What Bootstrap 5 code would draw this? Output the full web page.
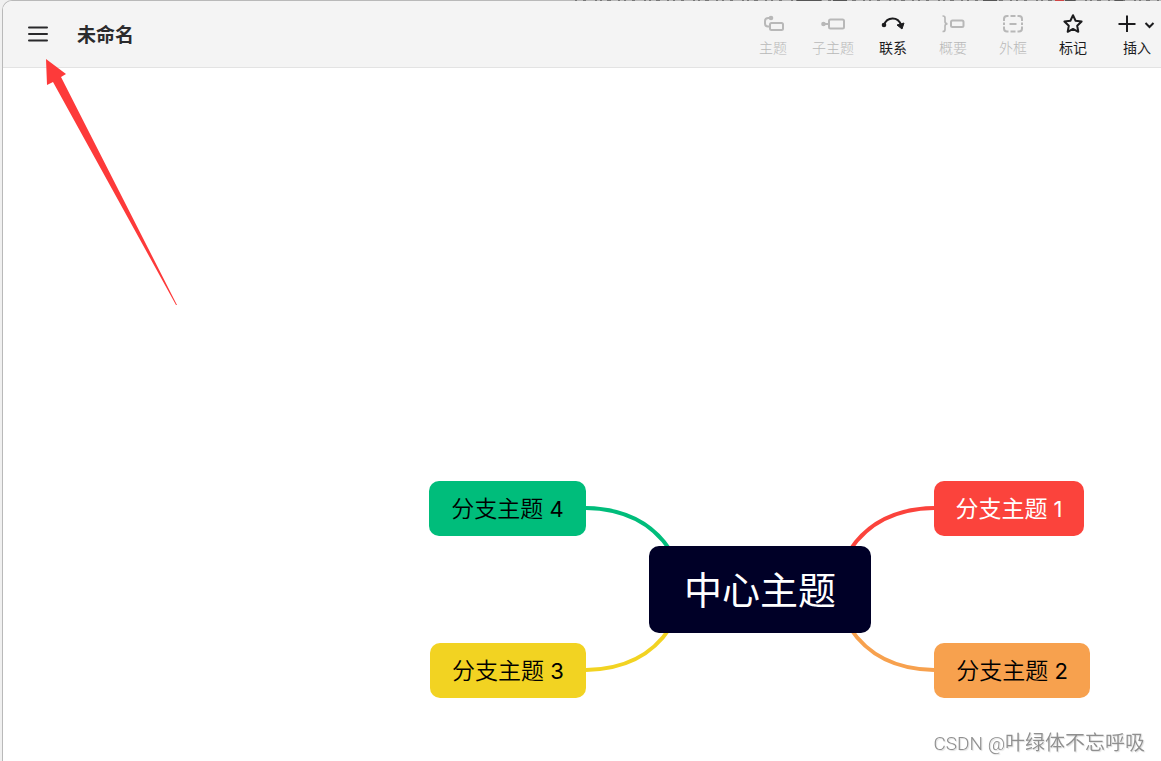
<!DOCTYPE html>
<html lang="zh-CN">
<head>
<meta charset="utf-8">
<meta name="viewport" content="width=device-width, initial-scale=1">
<title>未命名</title>
<link href="https://cdn.jsdelivr.net/npm/bootstrap@5.3.0/dist/css/bootstrap.min.css" rel="stylesheet">
<style>
  body { background: #f0f0f0; font-family: "Noto Sans CJK SC", sans-serif; color: #222; }
  .app-window { min-height: 100vh; margin-left: 2px; border-top: 1px solid #b9b9b9; border-left: 1px solid #b9b9b9; border-top-left-radius: 10px; background: #fff; }
  .backdrop-line { top: 0; right: 0; width: 586px; height: 1px; }
  .topbar { height: 67px; background: #f4f4f4; border-bottom: 1px solid #e3e3e3; }
  .doc-title { font-size: 19px; line-height: 24px; font-weight: 700; color: #2b2b2d; }
  .tool { width: 60px; padding: 0; border: 0; font-size: 14px; line-height: 20px; font-weight: 400; color: #1c1c1e; --bs-btn-disabled-color: #b8b8b8; --bs-btn-disabled-opacity: 1; }
  .tool:disabled { font-weight: 300; }
  .tool svg { display: block; height: 24px; margin: 1px auto; }
  .tool-insert { width: 48px; margin-left: 10px; }
  .board { padding: 0 71px 63px 0; }
  .mind-map { width: 661px; height: 217px; }
  .topic { position: absolute; display: flex; align-items: center; justify-content: center; height: 55px; width: 156px; border-radius: 10px; font-family: Inter, "Noto Sans CJK SC", sans-serif; font-size: 23px; line-height: 32px; font-weight: 350; color: #000; white-space: pre; }
  .topic span { font-weight: 400; font-size: 22px; }
  .topic-1 { left: 505px; top: 0; width: 150px; background: #fb433c; color: #fff; font-weight: 400; }
  .topic-2 { left: 505px; bottom: 0; background: #f7a14e; }
  .topic-3 { left: 1px; bottom: 0; background: #f2d322; }
  .topic-4 { left: 0; top: 0; width: 157px; background: #00bd7b; }
  .topic-center { left: 220px; top: 65px; width: 222px; height: 87px; background: #000027; color: #fff; font-size: 38px; line-height: 48px; font-weight: 400; }
  .pointer-arrow { left: 40px; top: 54px; pointer-events: none; }
  .credit { right: 16px; bottom: 2px; font-size: 20px; line-height: 30px; font-weight: 350; color: #8f8f8f; text-shadow: 1px 1px 1px #ddd; }
  .credit span { font-family: Roboto, sans-serif; font-size: 19px; font-weight: 300; }
</style>
</head>
<body>
<div class="app-window d-flex flex-column overflow-hidden">
  <header class="topbar d-flex align-items-center justify-content-between flex-shrink-0">
    <div class="d-flex align-items-center ps-4">
      <button class="btn p-0 border-0 d-flex" aria-label="菜单">
        <svg width="22" height="22" viewBox="0 0 22 22" fill="none" stroke="#29292b" stroke-width="2" stroke-linecap="round"><path d="M2 4.500H20M2 11H20M2 17.500H20"/></svg>
      </button>
      <h1 class="doc-title mb-0 ms-4 ps-1">未命名</h1>
    </div>
    <nav class="d-flex" aria-label="工具栏">
      <button class="btn tool" disabled>
        <svg width="24" viewBox="0 0 24 24" fill="none" stroke="currentColor" stroke-width="2"><circle cx="10" cy="6" r="2.3" fill="currentColor" stroke="none"/><path d="M10 6H7.500Q4 6 4 9V11.500Q4 14.500 7 14.500H9"/><rect x="9" y="11" width="13" height="7" rx="1.500"/></svg>主题</button>
      <button class="btn tool" disabled>
        <svg width="24" viewBox="0 0 24 24" fill="none" stroke="currentColor" stroke-width="2"><circle cx="2.500" cy="12" r="2.300" fill="currentColor" stroke="none"/><path d="M2 12H8"/><rect x="8" y="7.500" width="15" height="9" rx="1.500"/></svg>子主题</button>
      <button class="btn tool">
        <svg width="24" viewBox="0 0 24 24" fill="none" stroke="currentColor" stroke-width="2"><circle cx="3" cy="13" r="2.300" fill="currentColor" stroke="none"/><path d="M3 13C6 4.500 17 4 20 13"/><path d="M16 13L23 11L21 17Z" fill="currentColor" stroke="currentColor" stroke-width="1" stroke-linejoin="round"/></svg>联系</button>
      <button class="btn tool" disabled>
        <svg width="24" viewBox="0 0 24 24" fill="none" stroke="currentColor" stroke-width="2"><path d="M1.500 4H2Q4 4 4 6V9.500Q4 11.800 6.500 11.800Q4 11.800 4 14V17.500Q4 19.500 2 19.500H1.500" stroke-width="1.700"/><rect x="10" y="8.500" width="12.500" height="6.500" rx="1.500"/></svg>概要</button>
      <button class="btn tool" disabled>
        <svg width="24" viewBox="0 0 24 24" fill="none" stroke="currentColor" stroke-width="2"><path d="M3 9V7Q3 4 6 4H7.500M9.500 4H14.500M16.500 4H18Q21 4 21 7V9M21 10.500V13M21 14.500V16.500Q21 19.500 18 19.500H16.500M14.500 19.500H9.500M7.500 19.500H6Q3 19.500 3 16.500V14.500M3 13V10.500M8.500 12H15.500"/></svg>外框</button>
      <button class="btn tool">
        <svg width="24" viewBox="0 0 24 24" fill="none" stroke="currentColor" stroke-width="2" stroke-linejoin="round"><path d="M12 3.200L14.600 8.700L20.600 9.500L16.200 13.700L17.300 19.800L12 16.900L6.700 19.800L7.800 13.700L3.400 9.500L9.400 8.700Z"/></svg>标记</button>
      <button class="btn tool tool-insert">
        <svg width="44" viewBox="0 0 44 24" fill="none" stroke="currentColor" stroke-width="2"><path d="M3.500 12H20.500M12 3.500V20M30.500 11L34.500 15L38.500 11"/></svg>插入</button>
    </nav>
  </header>

  <main class="board flex-grow-1 d-flex justify-content-end align-items-end">
    <div class="mind-map position-relative flex-shrink-0">
      <svg class="d-block" width="661" height="217" fill="none" stroke-width="4" aria-hidden="true">
        <path d="M157 27Q214 28 241 69" stroke="#00bd7b"/>
        <path d="M157 189Q214 188 241 147" stroke="#f2d322"/>
        <path d="M505 27Q448 28 421 69" stroke="#fb433c"/>
        <path d="M505 189Q448 188 421 147" stroke="#f7a14e"/>
      </svg>
      <div class="topic topic-center">中心主题</div>
      <div class="topic topic-1">分支主题<span> 1</span></div>
      <div class="topic topic-2">分支主题<span> 2</span></div>
      <div class="topic topic-3">分支主题<span> 3</span></div>
      <div class="topic topic-4">分支主题<span> 4</span></div>
    </div>
  </main>
</div>

<svg class="backdrop-line position-absolute" aria-hidden="true" fill="none">
  <path d="M0 .5H586" stroke="#777" stroke-dasharray="2 6 3 9 2 3 2 5 4 7 2 4"/>
  <path d="M222 .5H246M258 .5H272M408 .5H422M490 .5H500M540 .5H548" stroke="#555"/>
  <path d="M480 .5H489" stroke="#d04545"/>
</svg>
<svg class="pointer-arrow position-absolute" width="140" height="254" aria-hidden="true">
  <path d="M6 5L26 20L21 23L137 251L136 251L13 28L7 31Z" fill="#fd3a3a"/>
</svg>
<div class="credit position-fixed"><span>CSDN @</span>叶绿体不忘呼吸</div>
<script src="https://cdn.jsdelivr.net/npm/bootstrap@5.3.0/dist/js/bootstrap.bundle.min.js"></script>
</body>
</html>
